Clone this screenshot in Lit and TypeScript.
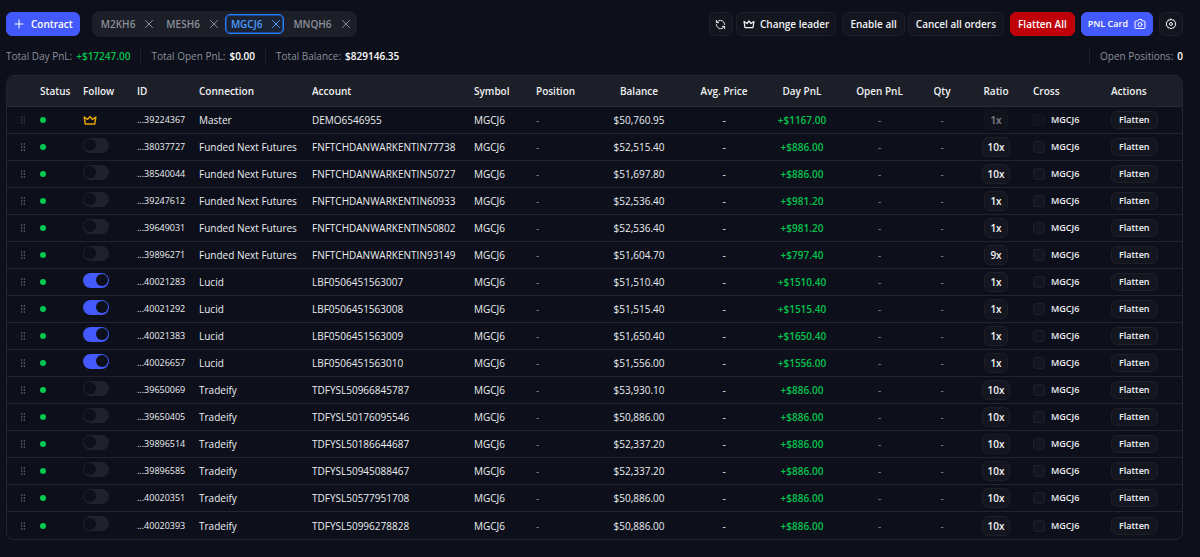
import { LitElement, html, css, svg } from "lit";
import { customElement, property, state } from "lit/decorators.js";
import { classMap } from "lit/directives/class-map.js";

interface Account {
  id: string;
  connection: string;
  account: string;
  balance: string;
  dayPnl: string;
  ratio: string;
  follow: boolean;
  leader?: boolean;
}

const row = (
  id: string,
  connection: string,
  account: string,
  balance: string,
  dayPnl: string,
  ratio: string,
  follow = false,
  leader = false
): Account => ({ id, connection, account, balance, dayPnl, ratio, follow, leader });

const FNF = "Funded Next Futures";

const ACCOUNTS: Account[] = [
  row("39224367", "Master", "DEMO6546955", "$50,760.95", "+$1167.00", "1x", false, true),
  row("38037727", FNF, "FNFTCHDANWARKENTIN77738", "$52,515.40", "+$886.00", "10x"),
  row("38540044", FNF, "FNFTCHDANWARKENTIN50727", "$51,697.80", "+$886.00", "10x"),
  row("39247612", FNF, "FNFTCHDANWARKENTIN60933", "$52,536.40", "+$981.20", "1x"),
  row("39649031", FNF, "FNFTCHDANWARKENTIN50802", "$52,536.40", "+$981.20", "1x"),
  row("39896271", FNF, "FNFTCHDANWARKENTIN93149", "$51,604.70", "+$797.40", "9x"),
  row("40021283", "Lucid", "LBF0506451563007", "$51,510.40", "+$1510.40", "1x", true),
  row("40021292", "Lucid", "LBF0506451563008", "$51,515.40", "+$1515.40", "1x", true),
  row("40021383", "Lucid", "LBF0506451563009", "$51,650.40", "+$1650.40", "1x", true),
  row("40026657", "Lucid", "LBF0506451563010", "$51,556.00", "+$1556.00", "1x", true),
  row("39650069", "Tradeify", "TDFYSL50966845787", "$53,930.10", "+$886.00", "10x"),
  row("39650405", "Tradeify", "TDFYSL50176095546", "$50,886.00", "+$886.00", "10x"),
  row("39896514", "Tradeify", "TDFYSL50186644687", "$52,337.20", "+$886.00", "10x"),
  row("39896585", "Tradeify", "TDFYSL50945088467", "$52,337.20", "+$886.00", "10x"),
  row("40020351", "Tradeify", "TDFYSL50577951708", "$50,886.00", "+$886.00", "10x"),
  row("40020393", "Tradeify", "TDFYSL50996278828", "$50,886.00", "+$886.00", "10x"),
];

const ICONS = {
  plus: svg`<path d="M4 12h16M12 4v16"/>`,
  close: svg`<path d="M19 5 5 19M5 5l14 14"/>`,
  refresh: svg`<path d="M21 12a9 9 0 0 0-9-9 9.75 9.75 0 0 0-6.74 2.74L3 8"/><path d="M3 3v5h5"/><path d="M3 12a9 9 0 0 0 9 9 9.75 9.75 0 0 0 6.74-2.74L21 16"/><path d="M16 16h5v5"/>`,
  crown: svg`<path stroke-width="2.5" d="M4 19h16l2-12-6 4-4-5-4 5-6-4z"/>`,
  camera: svg`<path d="M14.5 3h-5L7 6H4a2 2 0 0 0-2 2v11a2 2 0 0 0 2 2h16a2 2 0 0 0 2-2V8a2 2 0 0 0-2-2h-3z"/><circle cx="12" cy="13" r="4"/>`,
  gear: svg`<path d="M12 2l2.4 2.3 3.3-.5.9 3.3 3 1.5-1 3.4 1 3.2-3 1.6-.9 3.2-3.3-.4L12 22l-2.4-2.4-3.3.4-.9-3.2-3-1.6 1-3.2-1-3.4 3-1.5.9-3.3 3.3.5z"/><circle cx="12" cy="12" r="3"/>`,
  grip: svg`<g fill="currentColor" stroke="none"><circle cx="8" cy="3" r="2"/><circle cx="16" cy="3" r="2"/><circle cx="8" cy="12" r="2"/><circle cx="16" cy="12" r="2"/><circle cx="8" cy="21" r="2"/><circle cx="16" cy="21" r="2"/></g>`,
};

const icon = (name: keyof typeof ICONS, cls = "") => html`
  <svg class="icon ${cls}" viewBox="0 0 24 24" aria-hidden="true">${ICONS[name]}</svg>
`;

const shared = css`
  :host,
  * {
    box-sizing: border-box;
  }
  button,
  input {
    font: inherit;
    color: inherit;
    margin: 0;
    cursor: pointer;
  }
  .icon {
    width: 12px;
    height: 12px;
    flex: none;
    fill: none;
    stroke: currentColor;
    stroke-width: 2;
    stroke-linecap: round;
    stroke-linejoin: round;
  }
  .btn {
    display: inline-flex;
    align-items: center;
    justify-content: center;
    height: 24px;
    padding: 0 7px;
    border: 1px solid #1d2029;
    border-radius: 6px;
    background: #13161f;
    color: #f1f3f6;
    font-weight: 600;
    white-space: nowrap;
  }
`;

@customElement("contract-bar")
class ContractBar extends LitElement {
  @property({ type: Array }) contracts: string[] = [];
  @property() selected = "";

  static styles = [
    shared,
    css`
      :host {
        display: flex;
        flex-wrap: wrap;
        align-items: center;
        justify-content: space-between;
        gap: 8px;
      }
      .group {
        display: flex;
        align-items: center;
        gap: 12px;
      }
      .actions {
        display: flex;
        align-items: center;
        gap: 6px;
      }
      .pair {
        display: flex;
        gap: 3px;
      }
      .btn.primary {
        background: #4459fb;
        border-color: #4459fb;
        color: #fff;
      }
      .btn.danger {
        background: #c00009;
        border-color: #c00009;
        color: #fff;
      }
      .add {
        gap: 6px;
        padding: 0 6px;
      }
      .leader {
        gap: 5px;
        padding: 0 6px;
      }
      .card {
        gap: 6px;
        padding: 0 6px;
        font-size: 9px;
      }
      .square {
        width: 24px;
        padding: 0;
      }
      .tabs {
        display: flex;
        align-items: center;
        gap: 3px;
        height: 26px;
        padding: 0 3px;
        border-radius: 8px;
        background: #1c1f27;
      }
      .tab {
        display: flex;
        align-items: center;
        gap: 8px;
        height: 20px;
        padding: 0 1px 0 5px;
        border: 1px solid transparent;
        border-radius: 5px;
        color: #8b8f9a;
      }
      .tab.on {
        border-color: #2b7fff;
        box-shadow: inset 0 0 0 1px #1b4b93;
        background: #1a2233;
        color: #4a9bff;
      }
      .name,
      .remove {
        display: flex;
        align-items: center;
        padding: 0;
        border: 0;
        background: none;
        font-weight: 600;
      }
      .small {
        width: 11px;
        height: 11px;
      }
    `,
  ];

  render() {
    return html`
      <div class="group">
        <button class="btn primary add">${icon("plus")}Contract</button>
        <div class="tabs">
          ${this.contracts.map(
            (c) => html`
              <div class=${classMap({ tab: true, on: c === this.selected })}>
                <button class="name" @click=${() => (this.selected = c)}>${c}</button>
                <button class="remove" aria-label="Remove ${c}">${icon("close")}</button>
              </div>
            `
          )}
        </div>
      </div>
      <div class="actions">
        <div class="pair">
          <button class="btn square" aria-label="Refresh">${icon("refresh", "small")}</button>
          <button class="btn leader">${icon("crown")}Change leader</button>
        </div>
        <div class="pair">
          <button class="btn">Enable all</button>
          <button class="btn">Cancel all orders</button>
        </div>
        <button class="btn danger">Flatten All</button>
        <button class="btn primary card">PNL Card ${icon("camera")}</button>
        <button class="btn square" aria-label="Settings">${icon("gear")}</button>
      </div>
    `;
  }
}

@customElement("account-table")
class AccountTable extends LitElement {
  @property({ type: Array }) accounts: Account[] = [];
  @property() symbol = "";

  static styles = [
    shared,
    css`
      :host {
        display: block;
        border: 1px solid #22252e;
        border-radius: 8px;
        overflow: hidden;
      }
      table {
        width: 100%;
        table-layout: fixed;
        border-collapse: separate;
        border-spacing: 0;
      }
      th,
      td {
        padding: 0 8px;
        text-align: left;
        white-space: nowrap;
      }
      th {
        height: 31px;
        background: #1c1f27;
        border-bottom: 1px solid #292c36;
        color: #eef0f3;
        font-weight: 600;
      }
      td {
        height: 27px;
        border-bottom: 1px solid #22252e;
        color: #eceef2;
      }
      tr:last-child td {
        border-bottom: 0;
      }
      .w-grip { width: 25px; }
      .w-status { width: 43px; }
      .w-follow { width: 54px; }
      .w-id { width: 62px; }
      .w-conn { width: 113px; }
      .w-account { width: 162px; }
      .w-symbol { width: 62px; }
      .w-position { width: 64px; }
      .w-balance { width: 94px; }
      .w-avg { width: 76px; }
      .w-day { width: 80px; }
      .w-open { width: 75px; }
      .w-qty { width: 50px; }
      .w-ratio { width: 58px; }
      .w-cross { width: 78px; }
      .w-actions { width: 79px; }
      .mid {
        padding: 0;
        text-align: center;
      }
      td.muted {
        color: #868b96;
      }
      td.gain {
        color: #05c24e;
        font-weight: 600;
      }
      .id {
        font-size: 9px;
      }
      .grip {
        padding: 0 4px 0 12px;
        color: #7d818c;
      }
      .dots {
        display: block;
        width: 8px;
        height: 8px;
      }
      .dot {
        display: block;
        width: 6px;
        height: 6px;
        border-radius: 3px;
        background: #00c950;
      }
      .crown {
        display: block;
        width: 14px;
        height: 14px;
        color: #e6a503;
      }
      .toggle {
        appearance: none;
        display: flex;
        align-items: center;
        width: 26px;
        height: 15px;
        margin-bottom: 4px;
        padding: 0 1px;
        border-radius: 8px;
        background: #1f222a;
      }
      .toggle::before {
        content: "";
        width: 12px;
        height: 12px;
        border-radius: 6px;
        background: #0d101a;
      }
      .toggle:checked {
        justify-content: flex-end;
        background: #4459fb;
      }
      .ratio {
        height: 20px;
        padding: 0 5px;
      }
      .ratio:disabled {
        opacity: 0.5;
      }
      .cross {
        display: flex;
        align-items: center;
        gap: 6px;
        font-size: 9px;
        font-weight: 600;
      }
      .check {
        appearance: none;
        width: 12px;
        height: 12px;
        border: 1px solid #1e212a;
        border-radius: 3px;
        background: #13161f;
      }
      .check:checked {
        background: #4459fb;
      }
      .faded {
        opacity: 0.6;
      }
      .flatten {
        height: 18px;
        font-size: 9px;
      }
    `,
  ];

  render() {
    return html`
      <table>
        <colgroup>
          ${["grip", "status", "follow", "id", "conn", "account", "symbol", "position", "balance",
            "avg", "day", "open", "qty", "ratio", "cross", "actions"].map(
            (c) => html`<col class="w-${c}" />`
          )}
        </colgroup>
        <thead>
          <tr>
            <th></th>
            <th>Status</th>
            <th>Follow</th>
            <th>ID</th>
            <th>Connection</th>
            <th>Account</th>
            <th>Symbol</th>
            <th>Position</th>
            <th class="mid">Balance</th>
            <th class="mid">Avg. Price</th>
            <th class="mid">Day PnL</th>
            <th class="mid">Open PnL</th>
            <th class="mid">Qty</th>
            <th class="mid">Ratio</th>
            <th>Cross</th>
            <th>Actions</th>
          </tr>
        </thead>
        <tbody>
          ${this.accounts.map(
            (a) => html`
              <tr>
                <td class="grip">${icon("grip", a.leader ? "dots faded" : "dots")}</td>
                <td><span class="dot"></span></td>
                <td>
                  ${a.leader
                    ? icon("crown", "crown")
                    : html`<input class="toggle" type="checkbox" role="switch"
                        aria-label="Follow with ${a.account}" .checked=${a.follow} />`}
                </td>
                <td class="id">...${a.id}</td>
                <td>${a.connection}</td>
                <td>${a.account}</td>
                <td>${this.symbol}</td>
                <td class="muted">-</td>
                <td class="mid">${a.balance}</td>
                <td class="mid">-</td>
                <td class="mid gain">${a.dayPnl}</td>
                <td class="mid muted">-</td>
                <td class="mid muted">-</td>
                <td class="mid">
                  <button class="btn ratio" ?disabled=${a.leader}>${a.ratio}</button>
                </td>
                <td>
                  <label class="cross">
                    <input class=${a.leader ? "check faded" : "check"} type="checkbox" />${this.symbol}
                  </label>
                </td>
                <td><button class="btn flatten">Flatten</button></td>
              </tr>
            `
          )}
        </tbody>
      </table>
    `;
  }
}

@customElement("app-root")
class AppRoot extends LitElement {
  @state() private contracts = ["M2KH6", "MESH6", "MGCJ6", "MNQH6"];

  static styles = [
    shared,
    css`
      :host {
        display: block;
        min-height: 100vh;
        padding: 11px 17px 12px 6px;
        background: #0d101a;
        color: #e4e6eb;
        font: 10px/16px "Open Sans", "Noto Sans", sans-serif;
      }
      .stats {
        display: flex;
        align-items: center;
        padding: 11px 0;
        color: #8b8f9a;
      }
      .stat {
        display: flex;
        gap: 4px;
      }
      .stat + .stat {
        margin-left: 10px;
        padding-left: 10px;
        border-left: 1px solid #1d2029;
      }
      .stats .last {
        margin-left: auto;
      }
      .value {
        color: #fff;
        font-weight: 600;
      }
      .value.gain {
        color: #05c24e;
      }
    `,
  ];

  private stat(label: string, value: string, gain = false, last = false) {
    return html`
      <div class=${classMap({ stat: true, last })}>
        <span>${label}:</span><span class=${classMap({ value: true, gain })}>${value}</span>
      </div>
    `;
  }

  render() {
    return html`
      <contract-bar .contracts=${this.contracts} selected="MGCJ6"></contract-bar>
      <div class="stats">
        ${this.stat("Total Day PnL", "+$17247.00", true)}
        ${this.stat("Total Open PnL", "$0.00")}
        ${this.stat("Total Balance", "$829146.35")}
        ${this.stat("Open Positions", "0", false, true)}
      </div>
      <account-table .accounts=${ACCOUNTS} symbol="MGCJ6"></account-table>
    `;
  }
}
